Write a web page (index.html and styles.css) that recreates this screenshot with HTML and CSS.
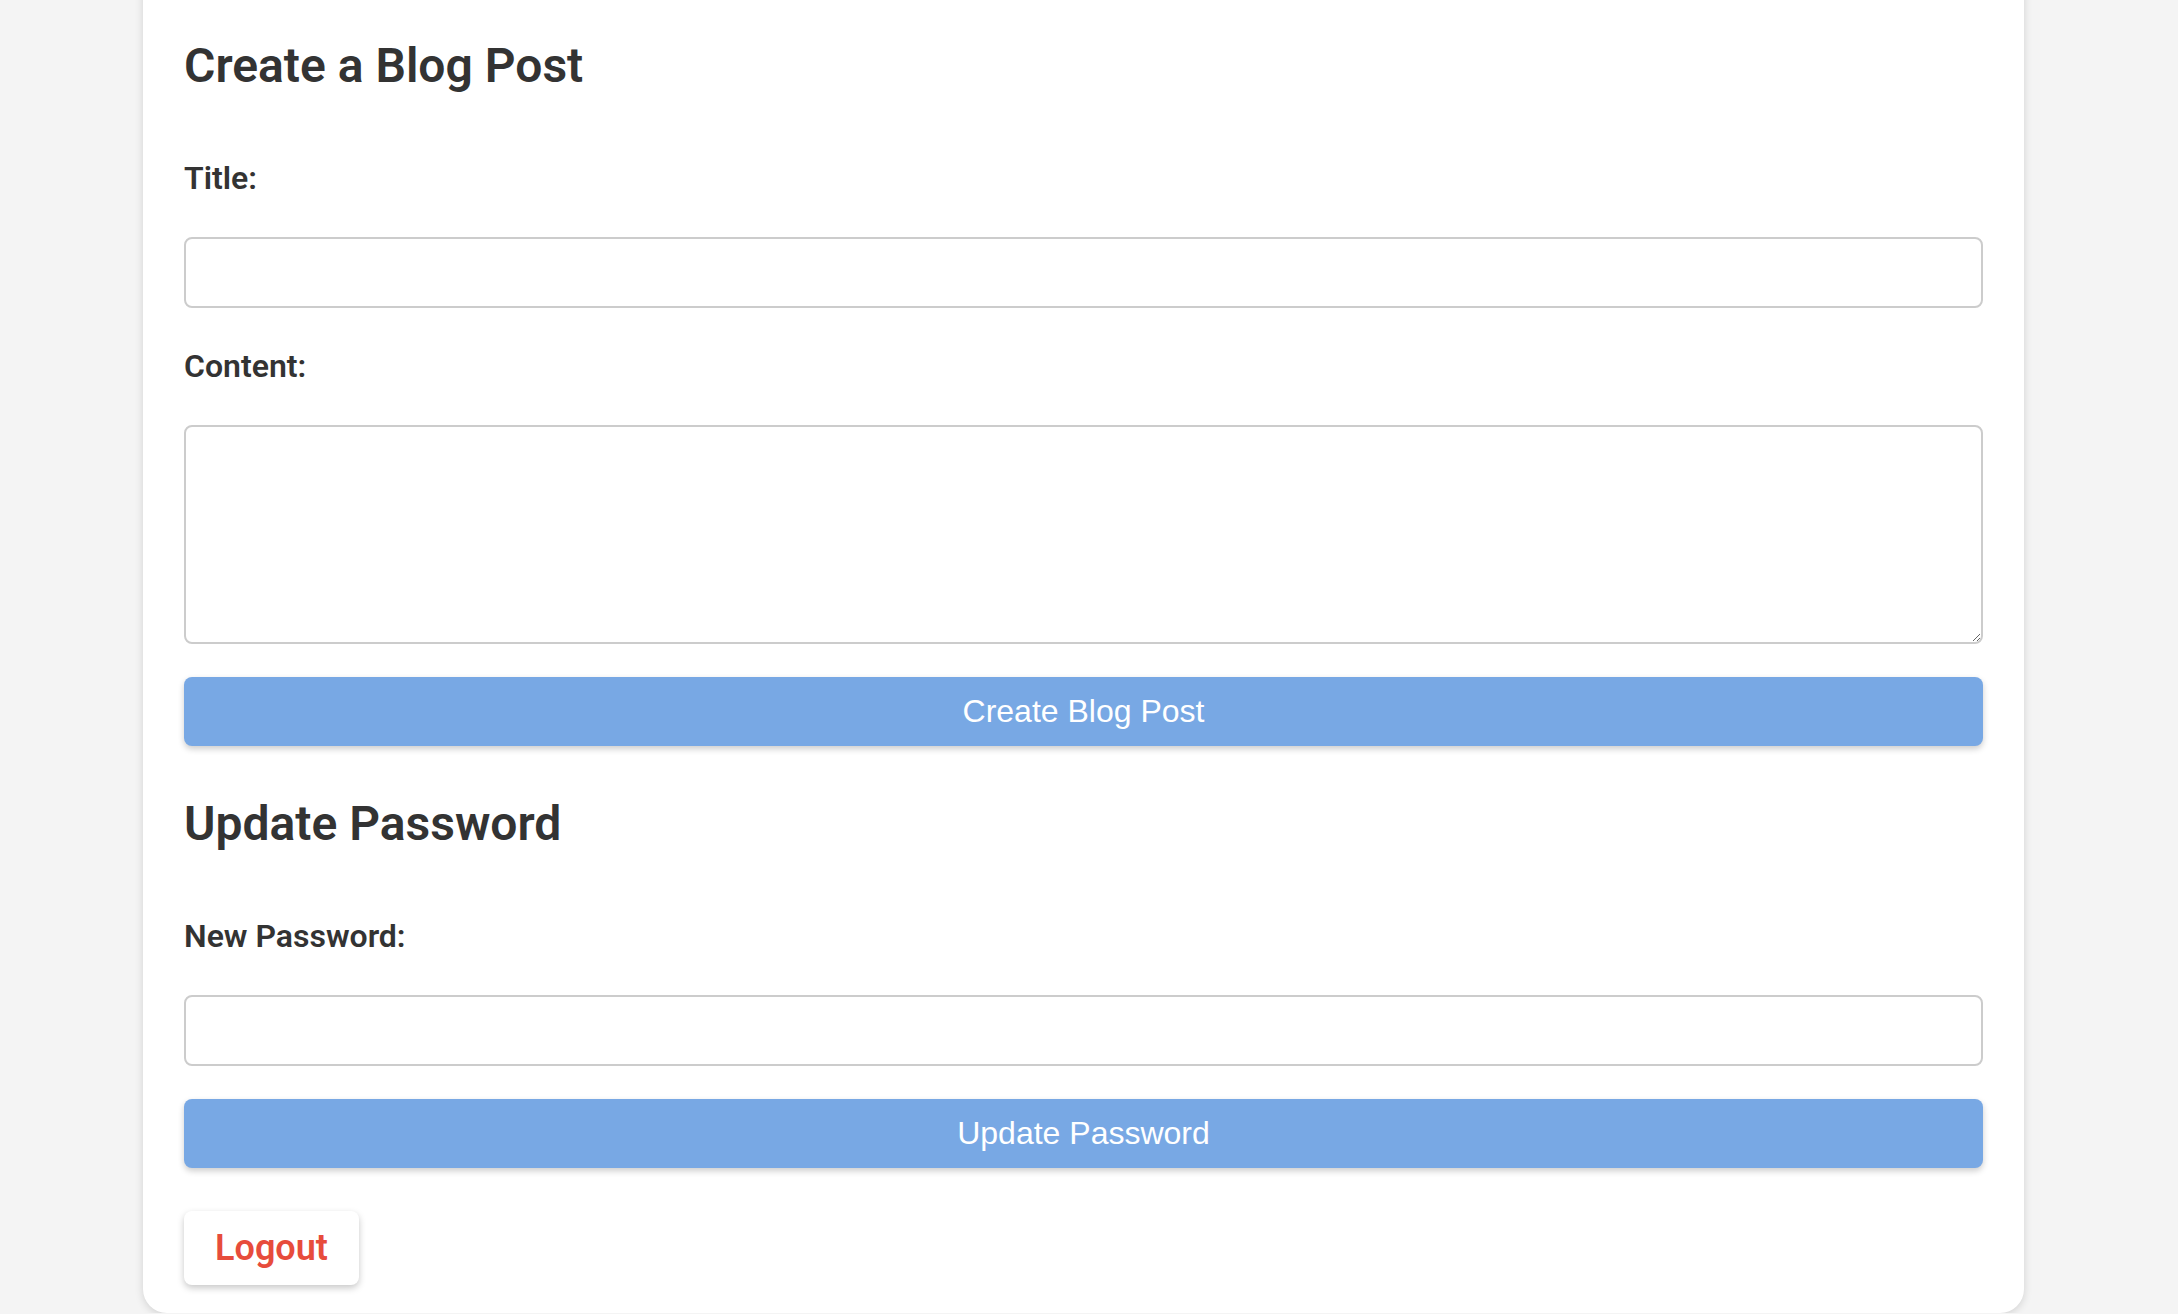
FILE: index.html
```html
<!DOCTYPE html>
<html lang="en">
<head>
<meta charset="utf-8">
<title>Dashboard</title>
<link rel="stylesheet" href="styles.css">
</head>
<body>
<div class="card">
  <form class="form">
    <h2 class="heading">Create a Blog Post</h2>
    <label class="label" for="title">Title:</label>
    <input class="field field-gap" id="title" type="text">
    <label class="label" for="content">Content:</label>
    <textarea class="area" id="content"></textarea>
    <button class="primary primary-gap" type="button">Create Blog Post</button>
  </form>
  <form class="form">
    <h2 class="heading">Update Password</h2>
    <label class="label" for="pw">New Password:</label>
    <input class="field field-before-btn" id="pw" type="password">
    <button class="primary primary-last" type="button">Update Password</button>
  </form>
  <button class="logout" type="button">Logout</button>
</div>
</body>
</html>
```
FILE: styles.css
```css
html, body {
  margin: 0;
  padding: 0;
}
body {
  background: #f4f4f4;
  font-family: Roboto, "Liberation Sans", sans-serif;
  color: #333;
  overflow: hidden;
}
.card {
  box-sizing: border-box;
  width: 1881px;
  margin: -40px 0 0 143px;
  padding: 77px 41px 28px;
  background: #fff;
  border-radius: 24px;
  box-shadow: 0 2px 8px rgba(0, 0, 0, 0.14);
  display: flex;
  flex-direction: column;
}
.form {
  display: flex;
  flex-direction: column;
}
.heading {
  margin: 0 0 64.5px;
  font-size: 48px;
  font-weight: 600;
  line-height: normal;
  color: #333;
}
.label {
  display: block;
  margin: 0 0 40px;
  font-size: 32px;
  font-weight: 600;
  line-height: normal;
  color: #333;
}
.field, .area {
  box-sizing: border-box;
  width: 100%;
  border: 2px solid #ccc;
  border-radius: 8px;
  background: #fff;
  font-family: Roboto, "Liberation Sans", sans-serif;
  font-size: 32px;
  padding: 16px;
  margin: 0;
}
.field {
  height: 71px;
}
.field-gap {
  margin-bottom: 39px;
}
.field-before-btn {
  margin-bottom: 33px;
}
.area {
  height: 219px;
  margin-bottom: 33px;
  resize: both;
}
.primary {
  box-sizing: border-box;
  width: 100%;
  height: 69px;
  border: none;
  border-radius: 8px;
  background: #78a8e4;
  color: #fff;
  font-family: "Liberation Sans", Arial, sans-serif;
  font-size: 32px;
  box-shadow: 0 3px 6px rgba(0, 0, 0, 0.2);
  cursor: pointer;
}
.primary-gap {
  margin-bottom: 49.5px;
}
.primary-last {
  margin-bottom: 43px;
}
.logout {
  align-self: flex-start;
  box-sizing: border-box;
  width: 175px;
  height: 74px;
  padding: 0;
  border: none;
  border-radius: 8px;
  background: #fff;
  color: #e74c3c;
  font-family: Roboto, "Liberation Sans", sans-serif;
  font-size: 36px;
  font-weight: 600;
  box-shadow: 0 3px 7px rgba(0, 0, 0, 0.22);
  cursor: pointer;
}
```
